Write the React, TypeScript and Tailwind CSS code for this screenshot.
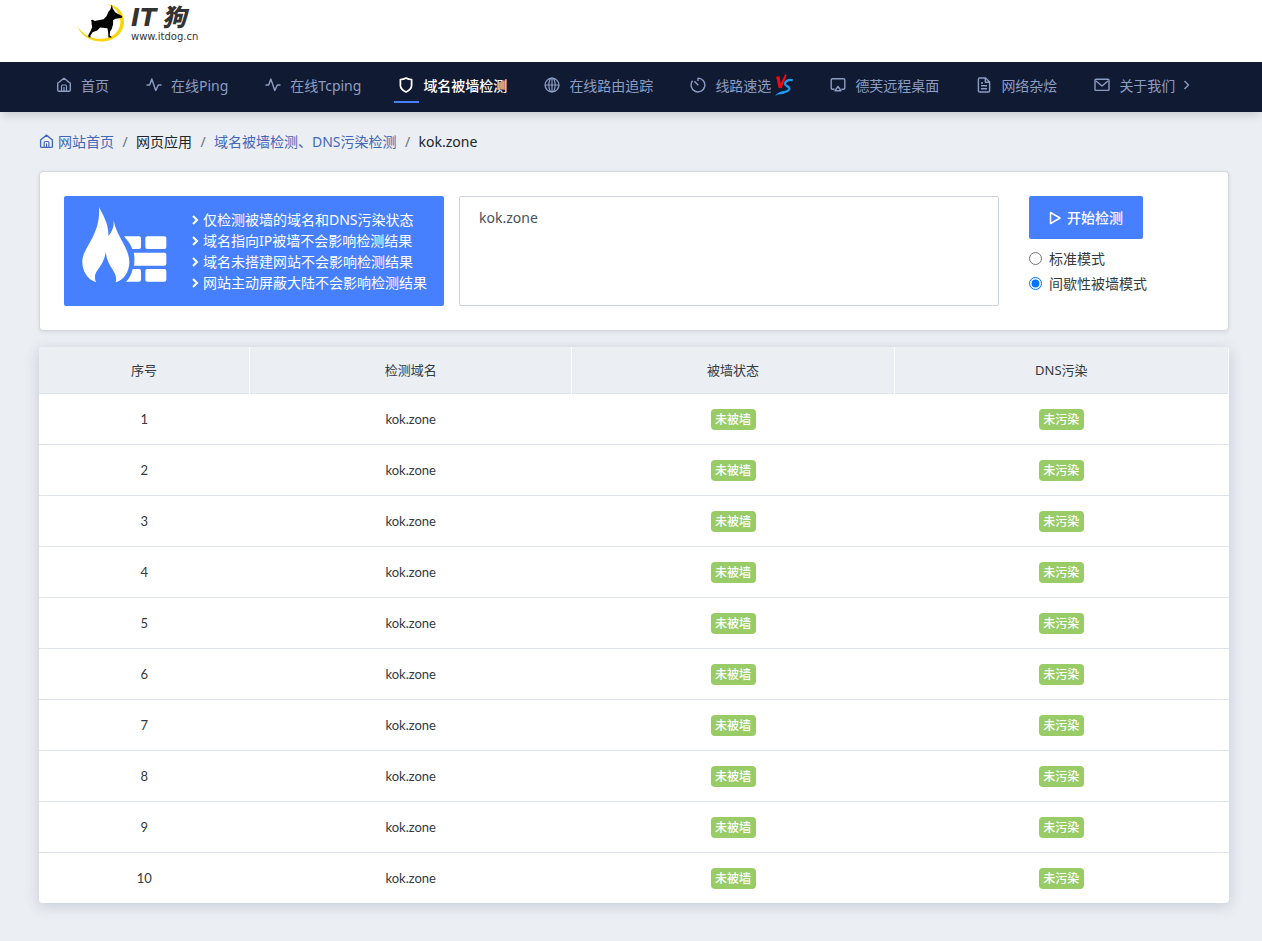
import React from 'react';

type IconProps = { className?: string; children: React.ReactNode };

function Icon({ className = 'size-4', children }: IconProps) {
  return (
    <svg
      className={`shrink-0 ${className}`}
      viewBox="0 0 16 16"
      fill="none"
      stroke="currentColor"
      strokeWidth="1.4"
      strokeLinejoin="round"
      aria-hidden="true"
    >
      {children}
    </svg>
  );
}

const HomeIcon = ({ className }: { className?: string }) => (
  <Icon className={className}>
    <path d="M1.7 6.3 8 1.2l6.3 5.1v6.7c0 .8-.5 1.3-1.3 1.3H3c-.8 0-1.3-.5-1.3-1.3z" />
    <path d="M5.5 14V9.2c0-.8.4-1.2 1.2-1.2h2.6c.8 0 1.2.4 1.2 1.2V14M8 10v4" strokeWidth="1.2" />
  </Icon>
);
const PulseIcon = () => (
  <Icon>
    <path d="M.5 8h3.2L5.8 2l4 11.5L12.3 8h3.2" />
  </Icon>
);
const ShieldIcon = () => (
  <Icon>
    <path d="M8 1c1.600 1.100 3.300 1.500 5.600 1.500v6c0 3.200-2.300 4.900-5.600 6.500-3.300-1.600-5.600-3.300-5.600-6.500v-6C4.700 2.500 6.400 2.100 8 1z" strokeWidth="1.7" />
  </Icon>
);
const GlobeIcon = () => (
  <Icon>
    <circle cx="8" cy="8" r="6.9" />
    <ellipse cx="8" cy="8" rx="3.2" ry="6.9" strokeWidth="1.2" />
    <path d="M1 8h14M8 1v14" strokeWidth="1.2" />
  </Icon>
);
const TimerIcon = () => (
  <Icon>
    <path d="M8 4V1.100a6.900 6.900 0 1 1-5.500 2.700M4.300 4.300l4 4" />
  </Icon>
);
const ScreenIcon = () => (
  <Icon>
    <path d="M4.5 12.300H2.500c-.8 0-1.300-.5-1.300-1.300V3c0-.8.5-1.300 1.300-1.300h11c.8 0 1.300.5 1.300 1.300v8c0 .8-.5 1.300-1.300 1.300h-2" />
    <path d="m8 9.500 3 4.200H5z" />
  </Icon>
);
const FileIcon = () => (
  <Icon>
    <path d="M9.500 1H3.700c-.8 0-1.300.5-1.300 1.300v11.400c0 .8.5 1.300 1.300 1.300h8.600c.8 0 1.300-.5 1.300-1.300V5.100zM9.300 1.200v4.100h4M5 6h2M5 8.800h6M5 11.700h6" />
  </Icon>
);
const MailIcon = () => (
  <Icon>
    <rect x="1" y="2.2" width="14" height="11.2" rx="1" />
    <path d="m2 4 6 5 6-5" />
  </Icon>
);

const VersusIcon = () => (
  <svg className="h-[22px] w-[18px] shrink-0" viewBox="0 0 54 66" fill="none" aria-hidden="true">
    <path d="M3 9 13 6l4 22L31 0c4 1 4 5 2 8L20 43l-9-1C8 34 8 22 3 9z" fill="#ee0c12" />
    <path
      d="M53 19c-9-3-21 0-23 9-2 9 15 8 13 17-3 9-16 9-28 13"
      stroke="#1e9cf0"
      strokeWidth="7"
    />
    <path d="M0 66c8-11 17-13 30-14l-3 7C16 59 8 61 0 66z" fill="#1e9cf0" />
  </svg>
);

function Logo() {
  return (
    <a href="#" className="flex items-start gap-[7px] text-[#333]">
      <svg className="h-[42px] w-[47px]" viewBox="50 0 142 126" aria-hidden="true">
        <path
          d="M51 78c11 31 43 48 74 47 40-2 67-28 67-60 0-30-22-50-52-53 25 9 41 28 41 53 0 31-25 51-59 52-28 1-55-13-71-39z"
          fill="#fbd40b"
        />
        <path
          d="m155 13 3 12 8 12 21 12-2 5-19 2-7 5v12l-4 14-5 8-1 12 6 4-1 2h-9l-1-16-2-12-22-2-9 9-14 5-7 11 2 4h-7l-1-6 7-13 5-12-2-9v-7l-2-4 6-2 5 4 27-5 9-9 6-14 6-7z"
          fill="#050505"
        />
      </svg>
      <span className="flex flex-col">
        <span className="flex h-8 items-center gap-1.5 pt-1 font-['DejaVu_Sans','Noto_Sans_CJK_SC',sans-serif] text-2xl leading-8 font-bold italic">
          <span>IT</span>
          <span className="font-black">狗</span>
        </span>
        <span className="font-['DejaVu_Sans'] text-[10px] leading-[10px]">www.itdog.cn</span>
      </span>
    </a>
  );
}

const navItems = [
  { label: '首页', icon: <HomeIcon /> },
  { label: '在线Ping', icon: <PulseIcon /> },
  { label: '在线Tcping', icon: <PulseIcon /> },
  { label: '域名被墙检测', icon: <ShieldIcon />, active: true },
  { label: '在线路由追踪', icon: <GlobeIcon /> },
  { label: '线路速选', icon: <TimerIcon />, after: <VersusIcon /> },
  { label: '德芙远程桌面', icon: <ScreenIcon /> },
  { label: '网络杂烩', icon: <FileIcon /> },
  {
    label: '关于我们',
    icon: <MailIcon />,
    after: (
      <Icon>
        <path d="m5.500 4 4 4-4 4" />
      </Icon>
    ),
  },
];

const notes = [
  '仅检测被墙的域名和DNS污染状态',
  '域名指向IP被墙不会影响检测结果',
  '域名未搭建网站不会影响检测结果',
  '网站主动屏蔽大陆不会影响检测结果',
];

const rows = Array.from({ length: 10 }, (_, i) => ({
  id: i + 1,
  domain: 'kok.zone',
  wall: '未被墙',
  dns: '未污染',
}));

function FirewallIcon() {
  return (
    <svg className="mb-3 h-[76px] w-[85px] shrink-0" viewBox="80 65 255 228" fill="#fff" aria-hidden="true">
      <path d="M122 291C92 280 80 252 81 226c1-38 56-78 50-161 12 24 30 52 28 87 13-14 17-30 16-47 7 47 47 82 47 125 0 32-18 54-41 61 9-32-26-43-30-93-4 50-44 58-29 93z" />
      <path d="M206 153h45q6 0 6 6v26q0 6-6 6h-20c-5-15-15-26-25-38z" />
      <rect x="270" y="153" width="63" height="38" rx="6" />
      <path d="M235 202h92q6 0 6 6v27q0 6-6 6h-91c2-14 2-26-1-39z" />
      <path d="M232 251h19q6 0 6 6v26q0 6-6 6h-39c11-10 17-24 20-38z" />
      <rect x="270" y="251" width="63" height="38" rx="6" />
    </svg>
  );
}

function Badge({ children }: { children: React.ReactNode }) {
  return (
    <span className="inline-flex h-[21px] w-[45px] items-center justify-center rounded bg-[#99cc66] text-xs font-medium text-white">
      {children}
    </span>
  );
}

function Separator() {
  return <li className="w-1.5 text-center text-[#6c757d]">/</li>;
}

export default function App() {
  return (
    <div className="min-h-screen bg-[#ebeef3] pb-9 font-['Noto_Sans','Noto_Sans_CJK_SC',sans-serif] text-sm text-[#333a40]">
      <header className="flex h-[62px] bg-white pl-[77px]">
        <Logo />
      </header>

      <nav className="bg-[#111a33] shadow-[0_6px_8px_-2px_rgba(0,0,0,0.13)]">
        <ul className="flex h-[50px] items-center gap-[37px] pl-14 whitespace-nowrap">
          {navItems.map((item) => (
            <li key={item.label} className="h-full">
              <a
                href="#"
                className={
                  item.active
                    ? 'relative flex h-full items-center gap-[9px] pb-1 font-medium text-white'
                    : 'flex h-full items-center gap-[9px] pb-1 text-[#8c9dc2]'
                }
              >
                {item.icon}
                <span className="flex items-center gap-1">
                  <span className="pt-0.5">{item.label}</span>
                  {item.after}
                </span>
                {item.active && <span className="absolute bottom-[9px] -left-1 h-0.5 w-[25px] bg-[#4680ff]" />}
              </a>
            </li>
          ))}
        </ul>
      </nav>

      <main className="pr-[33px] pl-[39px]">
        <ol className="flex h-[59px] items-center gap-2 text-[#212529]">
          <li>
            <a href="#" className="flex items-center gap-1 text-[#4466b8]">
              <HomeIcon className="size-[15px]" />
              网站首页
            </a>
          </li>
          <Separator />
          <li>网页应用</li>
          <Separator />
          <li>
            <a href="#" className="text-[#4466b8]">
              域名被墙检测、DNS污染检测
            </a>
          </li>
          <Separator />
          <li>kok.zone</li>
        </ol>

        <form
          className="flex rounded border border-[#d5d8dc] bg-white p-6 shadow-[0_1px_4px_rgba(0,0,0,0.1)]"
          onSubmit={(e) => e.preventDefault()}
        >
          <div className="flex h-[110px] w-[380px] shrink-0 items-center rounded-xs bg-[#4680ff] pl-[18px] text-white">
            <FirewallIcon />
            <ul className="pl-6 leading-[21px] whitespace-nowrap">
              {notes.map((note) => (
                <li key={note} className="flex items-center gap-1">
                  <svg className="h-2.5 w-2" viewBox="0 0 8 10" fill="none" stroke="currentColor" strokeWidth="2" aria-hidden="true">
                    <path d="m2 1 4 4-4 4" />
                  </svg>
                  {note}
                </li>
              ))}
            </ul>
          </div>
          <textarea
            aria-label="域名"
            defaultValue="kok.zone"
            className="ml-[15px] h-[110px] min-w-0 flex-1 resize-none rounded-xs border border-[#ced4da] bg-white px-[19px] py-[11px] text-[#495057] outline-none"
          />
          <div className="ml-[30px] flex w-[175px] flex-col items-start">
            <button
              type="submit"
              className="flex h-[43px] w-[114px] items-center justify-center gap-1.5 rounded-xs bg-[#4680ff] font-medium text-white"
            >
              <svg className="h-3.5 w-3" viewBox="0 0 12 14" fill="none" stroke="currentColor" strokeWidth="1.5" strokeLinejoin="round" aria-hidden="true">
                <path d="M1.500 1.500v11l9.500-5.500z" />
              </svg>
              开始检测
            </button>
            <label className="mt-[7px] flex h-[25px] items-center gap-[7px]">
              <input type="radio" name="mode" className="size-[13px]" />
              标准模式
            </label>
            <label className="flex h-[25px] items-center gap-[7px]">
              <input type="radio" name="mode" defaultChecked className="size-[13px]" />
              间歇性被墙模式
            </label>
          </div>
        </form>

        <div className="mt-4 overflow-hidden rounded bg-white shadow-[0_3px_14px_rgba(60,80,110,0.22)]">
          <table className="w-full table-fixed text-center text-[13px]">
            <colgroup>
              <col className="w-[17.7%]" />
              <col className="w-[27.1%]" />
              <col className="w-[27.1%]" />
              <col />
            </colgroup>
            <thead>
              <tr className="h-[46px] border-b border-[#dfe5ea] bg-[#ebeef3]">
                {['序号', '检测域名', '被墙状态', 'DNS污染'].map((title) => (
                  <th key={title} className="border-r border-white pt-0.5 font-normal">
                    {title}
                  </th>
                ))}
              </tr>
            </thead>
            <tbody className="font-['Lato','Noto_Sans_CJK_SC',sans-serif]">
              {rows.map((row) => (
                <tr key={row.id} className="h-[51px] border-b border-[#dfe5ea] last:border-b-0">
                  <td className="pt-0.5">{row.id}</td>
                  <td className="pt-0.5">{row.domain}</td>
                  <td className="pt-0.5">
                    <Badge>{row.wall}</Badge>
                  </td>
                  <td className="pt-0.5">
                    <Badge>{row.dns}</Badge>
                  </td>
                </tr>
              ))}
            </tbody>
          </table>
        </div>
      </main>
    </div>
  );
}
